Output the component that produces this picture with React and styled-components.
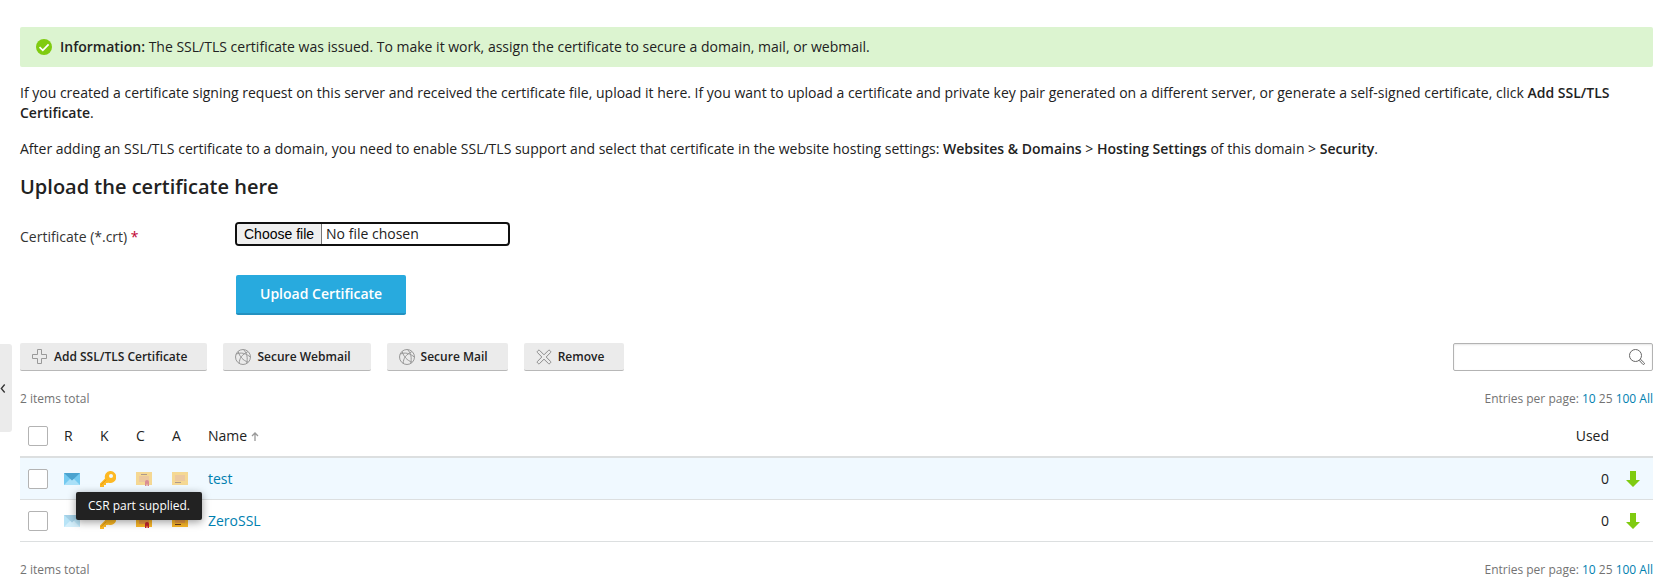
import React from "react";
import styled, { createGlobalStyle } from "styled-components";

const GlobalStyle = createGlobalStyle`
  *, *::before, *::after { box-sizing: border-box; }
  body {
    margin: 0;
    background: #fff;
    color: #222;
    font: 14px/20px "Open Sans", sans-serif;
  }
  button, input { font: inherit; color: inherit; }
  svg { display: block; flex: none; }
`;

const Page = styled.div`
  display: flex;
  align-items: flex-start;
`;

const Sidebar = styled.aside`
  flex: none;
  width: 20px;
  padding-top: 344px;
`;

const SidebarToggle = styled.button`
  display: flex;
  align-items: center;
  width: 12px;
  height: 88px;
  padding: 0;
  border: 0;
  border-radius: 0 3px 3px 0;
  background: #ebebeb;
`;

const Content = styled.main`
  flex: 1;
  min-width: 0;
  padding: 27px 14px 0 0;
`;

const Alert = styled.div`
  display: flex;
  align-items: center;
  gap: 8px;
  padding: 10px 16px;
  margin-bottom: 16px;
  border-radius: 2px;
  background: #dcf4d0;
`;

const Strong = styled.strong`
  font-weight: 600;
`;

const Paragraph = styled.p`
  margin: 0 0 16px;
`;

const Heading = styled.h2`
  margin: 0 0 23px;
  font-size: 20px;
  line-height: 24px;
  font-weight: 600;
`;

const FormRow = styled.div`
  display: flex;
  align-items: flex-start;
  margin-bottom: 28px;
`;

const FieldLabel = styled.label`
  flex: none;
  width: 215px;
  padding-top: 5px;
  color: #333;
`;

const Required = styled.span`
  color: #c00030;
`;

const FilePicker = styled.label`
  position: relative;
  display: flex;
  width: 275px;
  height: 24px;
  border: 2px solid #101010;
  border-radius: 4px;
  overflow: hidden;
`;

const FileInput = styled.input`
  position: absolute;
  inset: 0;
  opacity: 0;
`;

const FileButton = styled.span`
  padding: 0 7px;
  border-right: 1px solid #767676;
  background: #efefef;
  color: #000;
  font-family: "Liberation Sans", Arial, sans-serif;
`;

const FileName = styled.span`
  padding-left: 4px;
`;

const FormActions = styled.div`
  padding-left: 216px;
  margin-bottom: 28px;
`;

const PrimaryButton = styled.button`
  display: block;
  height: 40px;
  padding: 0 24px;
  border: 0;
  border-bottom: 2px solid #2491c0;
  border-radius: 2px;
  background: #28aade;
  color: #fff;
  font-weight: 600;
`;

const Toolbar = styled.div`
  display: flex;
  align-items: center;
  gap: 16px;
  margin-bottom: 18px;
`;

const ToolButton = styled.button`
  display: flex;
  align-items: center;
  gap: 6px;
  height: 28px;
  padding: 0 20px 0 12px;
  border: 0;
  border-bottom: 1px solid #b8b8b8;
  border-radius: 2px;
  background: #ebebeb;
  font-size: 12px;
  font-weight: 600;
  white-space: nowrap;
`;

const SearchBox = styled.form`
  display: flex;
  align-items: center;
  width: 200px;
  height: 28px;
  padding-right: 7px;
  margin-left: auto;
  border: 1px solid #b3b3b3;
  border-radius: 2px;
  box-shadow: inset 0 1px 2px rgba(0, 0, 0, 0.1);
`;

const SearchInput = styled.input`
  flex: 1;
  min-width: 0;
  padding: 0 8px;
  border: 0;
  outline: 0;
  background: transparent;
`;

const IconButton = styled.button`
  padding: 0;
  border: 0;
  background: none;
`;

const PagerBar = styled.div`
  display: flex;
  justify-content: space-between;
  font-size: 12px;
  color: #737373;
`;

const Link = styled.a`
  color: #0080b0;
  text-decoration: none;
`;

const Table = styled.table`
  width: 100%;
  margin: 7px 0 18px;
  border-collapse: separate;
  border-spacing: 0;
  table-layout: fixed;
`;

const Col = styled.col`
  width: ${(p) => p.$width};
`;

const HeadCell = styled.th`
  height: 42px;
  padding: 0 8px;
  border-bottom: 2px solid #dcdfe0;
  font-weight: 400;
  text-align: ${(p) => p.$align || "left"};
`;

const Row = styled.tr`
  background: ${(p) => (p.$hover ? "#f0f9ff" : "#fff")};
`;

const Cell = styled.td`
  height: 42px;
  padding: 0 8px;
  border-bottom: 1px solid #dcdfe0;
  text-align: ${(p) => p.$align || "left"};
`;

const SortLink = styled.a`
  display: inline-flex;
  align-items: center;
  gap: 4px;
  color: inherit;
  text-decoration: none;
`;

const Checkbox = styled.input.attrs({ type: "checkbox" })`
  appearance: none;
  display: block;
  width: 20px;
  height: 20px;
  margin: 0;
  border: 1px solid #b3b3b3;
  border-radius: 2px;
  background: #fff;
`;

const Part = styled.div`
  position: relative;
  width: 16px;
  opacity: ${(p) => (p.$missing ? 0.5 : 1)};
`;

const Anchor = styled.div`
  position: relative;
`;

const Tooltip = styled.div`
  position: absolute;
  z-index: 1;
  top: 21px;
  left: 12px;
  padding: 4px 12px;
  border-radius: 2px;
  background: #222;
  box-shadow: 0 2px 8px rgba(0, 0, 0, 0.4);
  color: #fff;
  font-size: 12px;
  white-space: nowrap;
`;

const Svg = ({ size = 16, children }) => (
  <svg width={size} height={size} viewBox={`0 0 ${size} ${size}`} fill="none" aria-hidden="true">
    {children}
  </svg>
);

const OkIcon = () => (
  <Svg>
    <circle cx="8" cy="8" r="8" fill="#7fcb10" />
    <path d="M3.5 8.2 6.8 11.4 12.6 5.4" stroke="#fff" strokeWidth="1.7" />
  </Svg>
);

const PlusIcon = () => (
  <Svg>
    <path d="M5.5.5h4v5h5v4h-5v5h-4v-5h-5v-4h5z" stroke="#999" />
  </Svg>
);

const GlobeIcon = () => (
  <Svg>
    <g stroke="#999">
      <circle cx="8" cy="8" r="7.5" />
      <path d="M3.200 2.500C4.500 7.500 8 11.500 13.200 13.200M4.200 14.400C4.200 9.500 7 5.500 12.800 2.700M1.200 5.200C6 2.800 11.500 4.500 15.400 8.200M8.500.6C12 4 13 9 11.600 14.500" />
    </g>
  </Svg>
);

const CrossIcon = () => (
  <Svg>
    <path
      d="M3.600 1.400 8 5.800 12.400 1.400Q13.200.800 14 1.600L14.400 2Q15.200 2.800 14.500 3.600L10.200 8 14.500 12.400Q15.200 13.200 14.400 14L14 14.400Q13.200 15.200 12.400 14.500L8 10.200 3.600 14.500Q2.800 15.200 2 14.400L1.600 14Q.8 13.200 1.500 12.400L5.800 8 1.500 3.600Q.8 2.800 1.600 2L2 1.600Q2.800.8 3.600 1.400Z"
      stroke="#8c8c8c"
    />
  </Svg>
);

const SearchIcon = () => (
  <Svg>
    <circle cx="6.500" cy="6.500" r="6" stroke="#666" />
    <path d="m10.500 11.700 1.200-1.200 3.700 3.500q.3.900-.4 1.400-.6.400-1.100 0z" stroke="#666" />
  </Svg>
);

const ChevronLeft = () => (
  <svg width="6" height="9" viewBox="0 0 6 9" fill="none" aria-hidden="true">
    <path d="M4.700.5 1.300 4.500l3.400 4" stroke="#333" strokeWidth="1.300" />
  </svg>
);

const SortUp = () => (
  <svg width="8" height="9" viewBox="0 0 8 9" fill="none" aria-hidden="true">
    <path d="M4 9V1M1 4l3-3 3 3" stroke="#999" strokeWidth="1.300" />
  </svg>
);

const MailIcon = () => (
  <Svg>
    <path d="M0 2h16v12H0z" fill="#74caf0" />
    <path d="M0 14 6 8h4l6 6z" fill="#a9e0f8" />
    <path d="M0 2h16L8 9.500z" fill="#4ba3cf" />
  </Svg>
);

const KeyIcon = () => (
  <Svg>
    <path
      fillRule="evenodd"
      d="M10 0a6 6 0 1 1-1.500 11.700L7 12H6v2H4v2H0v-3.500l5-5A6 6 0 0 1 10 0zm1 3a2 2 0 1 0 0 4 2 2 0 0 0 0-4z"
      fill="#fdb924"
    />
    <path d="m1 13.800 5-5" stroke="#e69a10" />
  </Svg>
);

const CertIcon = () => (
  <Svg>
    <path d="M0 1h16v13H0z" fill="#fbb829" />
    <path d="M3 5h10v6H3z" fill="#e99842" />
    <path d="M5 3.500h6" stroke="#6d3b1b" />
    <path d="M9 11h1.500v4H9zM11.500 11H13v4h-1.500z" fill="#c4232c" />
    <circle cx="11" cy="11" r="2" fill="#c4232c" />
  </Svg>
);

const CaIcon = () => (
  <Svg>
    <path d="M0 1h16v13H0z" fill="#fbb829" />
    <path d="M3 4h10v6H3z" fill="#e99842" />
    <path d="M3 11.500h6" stroke="#6d3b1b" />
  </Svg>
);

const DownloadIcon = () => (
  <Svg>
    <path d="M5 0h6v9h4l-7 7-7-7h4z" fill="#7fcb10" />
  </Svg>
);

const Pager = () => (
  <PagerBar>
    <span>2 items total</span>
    <span>
      Entries per page: <Link href="#10">10</Link> 25 <Link href="#100">100</Link>{" "}
      <Link href="#all">All</Link>
    </span>
  </PagerBar>
);

const PARTS = [MailIcon, KeyIcon, CertIcon, CaIcon];

const CERTIFICATES = [
  { name: "test", parts: [true, true, false, false], used: 0, hover: true, tooltip: "CSR part supplied." },
  { name: "ZeroSSL", parts: [false, true, true, true], used: 0 },
];

const TOOLS = [
  { label: "Add SSL/TLS Certificate", Icon: PlusIcon },
  { label: "Secure Webmail", Icon: GlobeIcon },
  { label: "Secure Mail", Icon: GlobeIcon },
  { label: "Remove", Icon: CrossIcon },
];

export default function App() {
  return (
    <>
      <GlobalStyle />
      <Page>
        <Sidebar>
          <SidebarToggle type="button" aria-label="Toggle sidebar">
            <ChevronLeft />
          </SidebarToggle>
        </Sidebar>
        <Content>
          <Alert role="status">
            <OkIcon />
            <span>
              <Strong>Information:</Strong> The SSL/TLS certificate was issued. To make it work,
              assign the certificate to secure a domain, mail, or webmail.
            </span>
          </Alert>
          <Paragraph>
            If you created a certificate signing request on this server and received the certificate
            file, upload it here. If you want to upload a certificate and private key pair generated
            on a different server, or generate a self-signed certificate, click{" "}
            <Strong>Add SSL/TLS Certificate</Strong>.
          </Paragraph>
          <Paragraph>
            After adding an SSL/TLS certificate to a domain, you need to enable SSL/TLS support and
            select that certificate in the website hosting settings:{" "}
            <Strong>Websites &amp; Domains</Strong> &gt; <Strong>Hosting Settings</Strong> of this
            domain &gt; <Strong>Security</Strong>.
          </Paragraph>
          <Heading>Upload the certificate here</Heading>
          <form onSubmit={(e) => e.preventDefault()}>
            <FormRow>
              <FieldLabel htmlFor="crt">
                Certificate (*.crt) <Required>*</Required>
              </FieldLabel>
              <FilePicker>
                <FileInput id="crt" type="file" accept=".crt" />
                <FileButton>Choose file</FileButton>
                <FileName>No file chosen</FileName>
              </FilePicker>
            </FormRow>
            <FormActions>
              <PrimaryButton type="submit">Upload Certificate</PrimaryButton>
            </FormActions>
          </form>
          <Toolbar>
            {TOOLS.map(({ label, Icon }) => (
              <ToolButton key={label} type="button">
                <Icon />
                {label}
              </ToolButton>
            ))}
            <SearchBox role="search" onSubmit={(e) => e.preventDefault()}>
              <SearchInput type="text" aria-label="Search" />
              <IconButton type="submit" aria-label="Search">
                <SearchIcon />
              </IconButton>
            </SearchBox>
          </Toolbar>
          <Pager />
          <Table>
            <colgroup>
              <Col $width="36px" />
              <Col $width="36px" />
              <Col $width="36px" />
              <Col $width="36px" />
              <Col $width="36px" />
              <Col $width="auto" />
              <Col $width="100px" />
              <Col $width="36px" />
            </colgroup>
            <thead>
              <tr>
                <HeadCell>
                  <Checkbox aria-label="Select all" />
                </HeadCell>
                <HeadCell>R</HeadCell>
                <HeadCell>K</HeadCell>
                <HeadCell>C</HeadCell>
                <HeadCell>A</HeadCell>
                <HeadCell>
                  <SortLink href="#name">
                    Name <SortUp />
                  </SortLink>
                </HeadCell>
                <HeadCell $align="right">Used</HeadCell>
                <HeadCell />
              </tr>
            </thead>
            <tbody>
              {CERTIFICATES.map((cert) => (
                <Row key={cert.name} $hover={cert.hover}>
                  <Cell>
                    <Checkbox aria-label={`Select ${cert.name}`} />
                  </Cell>
                  {PARTS.map((Icon, i) => (
                    <Cell key={i}>
                      <Anchor>
                        <Part $missing={!cert.parts[i]}>
                          <Icon />
                        </Part>
                        {i === 0 && cert.tooltip && <Tooltip role="tooltip">{cert.tooltip}</Tooltip>}
                      </Anchor>
                    </Cell>
                  ))}
                  <Cell>
                    <Link href={`#${cert.name}`}>{cert.name}</Link>
                  </Cell>
                  <Cell $align="right">{cert.used}</Cell>
                  <Cell>
                    <Link href="#download" aria-label={`Download ${cert.name}`}>
                      <DownloadIcon />
                    </Link>
                  </Cell>
                </Row>
              ))}
            </tbody>
          </Table>
          <Pager />
        </Content>
      </Page>
    </>
  );
}
